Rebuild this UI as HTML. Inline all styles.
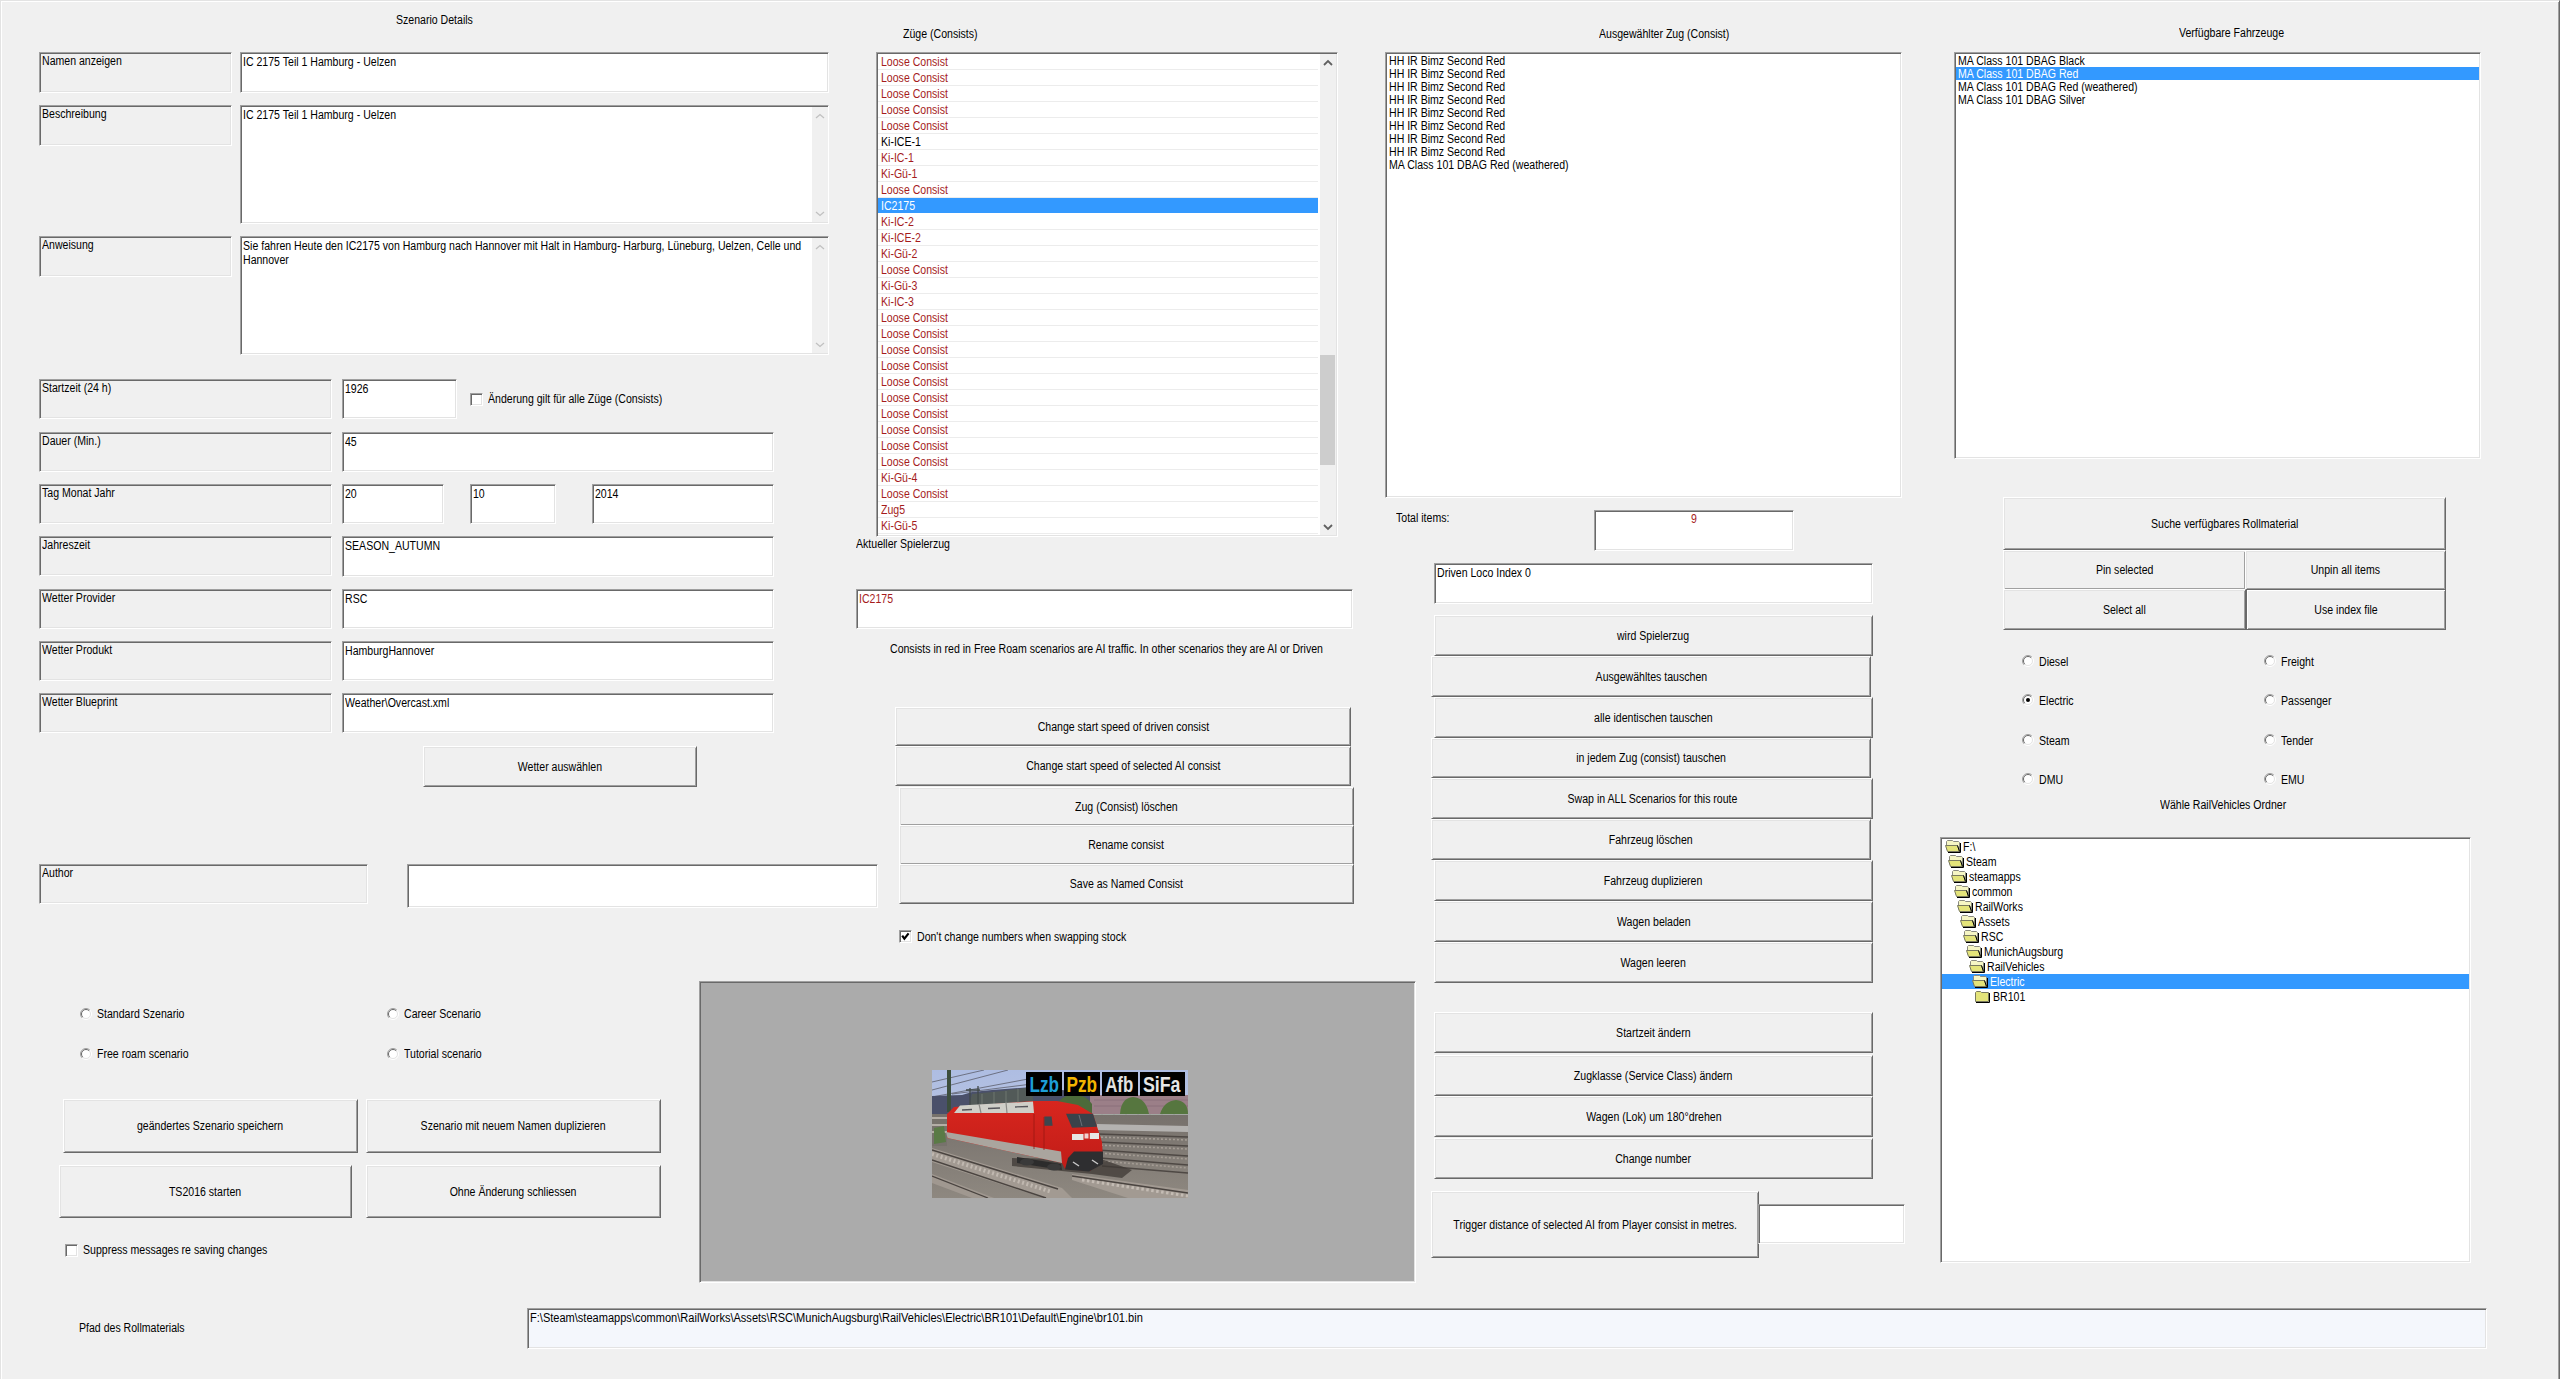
<!DOCTYPE html>
<html><head><meta charset="utf-8"><title>Scenario Editor</title>
<style>
html,body{margin:0;padding:0}
body{width:2560px;height:1379px;background:#f0f0f0;position:relative;overflow:hidden;font-family:"Liberation Sans",sans-serif;font-size:12px;color:#000}
.a{position:absolute;box-sizing:border-box}
.s{border:1px solid;border-color:#a0a0a0 #fff #fff #a0a0a0;box-shadow:inset 1px 1px 0 #696969,inset -1px -1px 0 #e3e3e3}
.r{border:1px solid;border-color:#fff #696969 #696969 #fff;box-shadow:inset 1px 1px 0 #e3e3e3,inset -1px -1px 0 #a0a0a0;background:#f0f0f0}
.b{display:flex;align-items:center;justify-content:center;white-space:pre;line-height:13px}
.b span{display:inline-block;transform:scaleX(0.88);position:relative;top:0.5px}
.t{position:absolute;white-space:pre;line-height:13px;transform:scaleX(0.88);transform-origin:0 0}
</style></head><body>
<div class="a" style="left:0;top:0;width:2560px;height:1379px;border-left:1px solid #e3e3e3;border-top:1px solid #e3e3e3;border-right:1px solid #696969;box-shadow:inset 1px 1px 0 #fff, inset -1px 0 0 #a0a0a0"></div>
<div class="t" style="left:396px;top:14.3px;">Szenario Details</div>
<div class="a s" style="left:39px;top:52px;width:193px;height:41px;background:#f0f0f0;"></div>
<div class="t" style="left:41.5px;top:55.3px;">Namen anzeigen</div>
<div class="a s" style="left:240px;top:52px;width:589px;height:41px;background:#fff;"></div>
<div class="t" style="left:243px;top:56.3px;">IC 2175 Teil 1 Hamburg - Uelzen</div>
<div class="a s" style="left:39px;top:105px;width:193px;height:41px;background:#f0f0f0;"></div>
<div class="t" style="left:41.5px;top:108.3px;">Beschreibung</div>
<div class="a s" style="left:240px;top:105px;width:589px;height:119px;background:#fff;"></div>
<div class="t" style="left:243px;top:109.3px;">IC 2175 Teil 1 Hamburg - Uelzen</div>
<div class="a s" style="left:39px;top:236px;width:193px;height:41px;background:#f0f0f0;"></div>
<div class="t" style="left:41.5px;top:239.3px;">Anweisung</div>
<div class="a s" style="left:240px;top:236px;width:589px;height:119px;background:#fff;"></div>
<div class="t" style="left:243px;top:240.3px;">Sie fahren Heute den IC2175 von Hamburg nach Hannover mit Halt in Hamburg- Harburg, Lüneburg, Uelzen, Celle und</div>
<div class="t" style="left:243px;top:254.0px;">Hannover</div>
<div class="a" style="left:812px;top:107px;width:16px;height:115px;background:#f0f0f0"></div>
<svg class="a" style="left:815px;top:113px" width="10" height="8"><path d="M1 5 L5 1.5 L9 5" stroke="#c0c0c0" stroke-width="1.3" fill="none"/></svg>
<svg class="a" style="left:815px;top:210px" width="10" height="8"><path d="M1 2 L5 5.5 L9 2" stroke="#c0c0c0" stroke-width="1.3" fill="none"/></svg>
<div class="a" style="left:812px;top:238px;width:16px;height:115px;background:#f0f0f0"></div>
<svg class="a" style="left:815px;top:244px" width="10" height="8"><path d="M1 5 L5 1.5 L9 5" stroke="#c0c0c0" stroke-width="1.3" fill="none"/></svg>
<svg class="a" style="left:815px;top:341px" width="10" height="8"><path d="M1 2 L5 5.5 L9 2" stroke="#c0c0c0" stroke-width="1.3" fill="none"/></svg>
<div class="a s" style="left:39px;top:379px;width:293px;height:40px;background:#f0f0f0;"></div>
<div class="t" style="left:41.5px;top:382.3px;">Startzeit (24 h)</div>
<div class="a s" style="left:39px;top:432px;width:293px;height:40px;background:#f0f0f0;"></div>
<div class="t" style="left:41.5px;top:435.3px;">Dauer (Min.)</div>
<div class="a s" style="left:39px;top:484px;width:293px;height:40px;background:#f0f0f0;"></div>
<div class="t" style="left:41.5px;top:487.3px;">Tag Monat Jahr</div>
<div class="a s" style="left:39px;top:536px;width:293px;height:40px;background:#f0f0f0;"></div>
<div class="t" style="left:41.5px;top:539.3px;">Jahreszeit</div>
<div class="a s" style="left:39px;top:589px;width:293px;height:40px;background:#f0f0f0;"></div>
<div class="t" style="left:41.5px;top:592.3px;">Wetter Provider</div>
<div class="a s" style="left:39px;top:641px;width:293px;height:40px;background:#f0f0f0;"></div>
<div class="t" style="left:41.5px;top:644.3px;">Wetter Produkt</div>
<div class="a s" style="left:39px;top:693px;width:293px;height:40px;background:#f0f0f0;"></div>
<div class="t" style="left:41.5px;top:696.3px;">Wetter Blueprint</div>
<div class="a s" style="left:342px;top:379px;width:115px;height:40px;background:#fff;"></div>
<div class="t" style="left:345px;top:383.3px;">1926</div>
<div class="a s" style="left:470px;top:393px;width:13px;height:13px;background:#fff"></div>
<div class="t" style="left:488px;top:392.6px;">Änderung gilt für alle Züge (Consists)</div>
<div class="a s" style="left:342px;top:432px;width:432px;height:40px;background:#fff;"></div>
<div class="t" style="left:345px;top:436.3px;">45</div>
<div class="a s" style="left:342px;top:484px;width:102px;height:40px;background:#fff;"></div>
<div class="t" style="left:345px;top:488.3px;">20</div>
<div class="a s" style="left:470px;top:484px;width:86px;height:40px;background:#fff;"></div>
<div class="t" style="left:473px;top:488.3px;">10</div>
<div class="a s" style="left:592px;top:484px;width:182px;height:40px;background:#fff;"></div>
<div class="t" style="left:595px;top:488.3px;">2014</div>
<div class="a s" style="left:342px;top:536px;width:432px;height:41px;background:#fff;"></div>
<div class="t" style="left:345px;top:540.3px;">SEASON_AUTUMN</div>
<div class="a s" style="left:342px;top:589px;width:432px;height:40px;background:#fff;"></div>
<div class="t" style="left:345px;top:593.3px;">RSC</div>
<div class="a s" style="left:342px;top:641px;width:432px;height:40px;background:#fff;"></div>
<div class="t" style="left:345px;top:645.3px;">HamburgHannover</div>
<div class="a s" style="left:342px;top:693px;width:432px;height:40px;background:#fff;"></div>
<div class="t" style="left:345px;top:697.3px;">Weather\Overcast.xml</div>
<div class="a r b" style="left:423px;top:746px;width:274px;height:41px;"><span>Wetter auswählen</span></div>
<div class="a s" style="left:39px;top:864px;width:329px;height:40px;background:#f0f0f0;"></div>
<div class="t" style="left:41.5px;top:867.3px;">Author</div>
<div class="a s" style="left:407px;top:864px;width:471px;height:44px;background:#fff;"></div>
<svg class="a" style="left:80px;top:1008px" width="12" height="12"><circle cx="6" cy="6" r="5" fill="#fff"/><path d="M2.1 9.9 A5.5 5.5 0 0 1 9.9 2.1" stroke="#a0a0a0" fill="none"/><path d="M9.9 2.1 A5.5 5.5 0 0 1 2.1 9.9" stroke="#fff" fill="none"/><path d="M2.8 9.2 A4.5 4.5 0 0 1 9.2 2.8" stroke="#696969" fill="none"/><path d="M9.2 2.8 A4.5 4.5 0 0 1 2.8 9.2" stroke="#e3e3e3" fill="none"/></svg>
<div class="t" style="left:97px;top:1007.8px;">Standard Szenario</div>
<svg class="a" style="left:80px;top:1048px" width="12" height="12"><circle cx="6" cy="6" r="5" fill="#fff"/><path d="M2.1 9.9 A5.5 5.5 0 0 1 9.9 2.1" stroke="#a0a0a0" fill="none"/><path d="M9.9 2.1 A5.5 5.5 0 0 1 2.1 9.9" stroke="#fff" fill="none"/><path d="M2.8 9.2 A4.5 4.5 0 0 1 9.2 2.8" stroke="#696969" fill="none"/><path d="M9.2 2.8 A4.5 4.5 0 0 1 2.8 9.2" stroke="#e3e3e3" fill="none"/></svg>
<div class="t" style="left:97px;top:1047.8px;">Free roam scenario</div>
<svg class="a" style="left:387px;top:1008px" width="12" height="12"><circle cx="6" cy="6" r="5" fill="#fff"/><path d="M2.1 9.9 A5.5 5.5 0 0 1 9.9 2.1" stroke="#a0a0a0" fill="none"/><path d="M9.9 2.1 A5.5 5.5 0 0 1 2.1 9.9" stroke="#fff" fill="none"/><path d="M2.8 9.2 A4.5 4.5 0 0 1 9.2 2.8" stroke="#696969" fill="none"/><path d="M9.2 2.8 A4.5 4.5 0 0 1 2.8 9.2" stroke="#e3e3e3" fill="none"/></svg>
<div class="t" style="left:404px;top:1007.8px;">Career Scenario</div>
<svg class="a" style="left:387px;top:1048px" width="12" height="12"><circle cx="6" cy="6" r="5" fill="#fff"/><path d="M2.1 9.9 A5.5 5.5 0 0 1 9.9 2.1" stroke="#a0a0a0" fill="none"/><path d="M9.9 2.1 A5.5 5.5 0 0 1 2.1 9.9" stroke="#fff" fill="none"/><path d="M2.8 9.2 A4.5 4.5 0 0 1 9.2 2.8" stroke="#696969" fill="none"/><path d="M9.2 2.8 A4.5 4.5 0 0 1 2.8 9.2" stroke="#e3e3e3" fill="none"/></svg>
<div class="t" style="left:404px;top:1047.8px;">Tutorial scenario</div>
<div class="a r b" style="left:63px;top:1099px;width:295px;height:54px;"><span>geändertes Szenario speichern</span></div>
<div class="a r b" style="left:366px;top:1099px;width:295px;height:54px;"><span>Szenario mit neuem Namen duplizieren</span></div>
<div class="a r b" style="left:59px;top:1165px;width:293px;height:53px;"><span>TS2016 starten</span></div>
<div class="a r b" style="left:366px;top:1165px;width:295px;height:53px;"><span>Ohne Änderung schliessen</span></div>
<div class="a s" style="left:65px;top:1244px;width:13px;height:13px;background:#fff"></div>
<div class="t" style="left:83px;top:1244.3px;">Suppress messages re saving changes</div>
<div class="t" style="left:79px;top:1322.3px;">Pfad des Rollmaterials</div>
<div class="a s" style="left:527px;top:1308px;width:1960px;height:41px;background:#f4f7fc;"></div>
<div class="t" style="left:530px;top:1312.3px;transform:scaleX(0.92)">F:\Steam\steamapps\common\RailWorks\Assets\RSC\MunichAugsburg\RailVehicles\Electric\BR101\Default\Engine\br101.bin</div>
<div class="a" style="left:699px;top:981px;width:717px;height:302px;background:#ababab;border:1px solid;border-color:#a0a0a0 #fff #fff #a0a0a0;box-shadow:inset 1px 1px 0 #696969, inset -1px -1px 0 #e3e3e3"></div>
<svg class="a" style="left:932px;top:1070px" width="256" height="128" viewBox="0 0 256 128">
<defs>
<linearGradient id="sky" x1="0" y1="0" x2="0" y2="1"><stop offset="0" stop-color="#aebde2"/><stop offset="1" stop-color="#c6cde0"/></linearGradient>
<linearGradient id="body" x1="0" y1="0" x2="0" y2="1"><stop offset="0" stop-color="#d8261e"/><stop offset="1" stop-color="#c01c18"/></linearGradient>
<linearGradient id="gnd" x1="0" y1="0" x2="0" y2="1"><stop offset="0" stop-color="#77716c"/><stop offset="1" stop-color="#8e8880"/></linearGradient>
</defs>
<rect width="256" height="128" fill="url(#sky)"/>
<path d="M0 12 L52 0 M0 20 L76 0 M0 27 L96 9 M20 24 L100 14" stroke="#50505a" stroke-width="0.7" fill="none"/>
<path d="M0 26 L30 25 L40 22 L60 20 L100 17 L130 20 L160 24 V50 H0 Z" fill="#4a506a"/>
<path d="M36 40 L40 24 L70 21 L100 17 L102 40 Z" fill="#525a58"/><path d="M50 24 V40 M62 22 V40 M74 21 V40 M86 19 V40" stroke="#6a726c" stroke-width="1.2"/>
<rect x="158" y="25" width="98" height="20" fill="#9b7f88"/>
<path d="M162 30 H256 M162 36 H256" stroke="#8a707a" stroke-width="1"/>
<path d="M124 36 Q128 26 140 25 Q154 24 160 34 V46 H124 Z" fill="#4c6a3a"/>
<path d="M188 44 Q189 28 201 27 Q214 28 217 44 Z" fill="#56763f"/>
<path d="M228 44 Q232 31 244 30 Q256 31 256 44 Z" fill="#56763f"/>
<rect x="158" y="44" width="98" height="13" fill="#a3a7a2"/>
<path d="M158 44 V57 M170 44 V57 M182 44 V57 M194 44 V57 M206 44 V57 M218 44 V57 M230 44 V57 M242 44 V57" stroke="#959a94" stroke-width="0.8"/>
<rect x="0" y="45" width="256" height="83" fill="url(#gnd)"/>
<rect x="0" y="44" width="15" height="32" fill="#77726c"/><path d="M0 48 H15 M0 55 H15 M0 62 H15" stroke="#b4aea6" stroke-width="2"/>
<path d="M165 54 L256 56 V62 L165 60 Z" fill="#b4b2b0"/>
<path d="M165 64 L256 67 M165 72 L256 76 M165 80 L256 86 M168 88 L256 95 M170 96 L256 103" stroke="#4e4844" stroke-width="1.4" fill="none"/>
<path d="M165 67 L256 70 M165 75 L256 79 M165 83 L256 89 M168 91 L256 98" stroke="#a49c94" stroke-width="1.6" stroke-dasharray="2 2" fill="none"/>
<path d="M0 78 L130 118 L140 128 H112 L0 92 Z" fill="#a29a92"/>
<path d="M0 80 L126 119 M0 90 L114 128" stroke="#4a4440" stroke-width="1.5" fill="none"/>
<path d="M0 84 L120 122" stroke="#c0b8b0" stroke-width="4" stroke-dasharray="2 2.5" fill="none"/>
<path d="M0 104 L62 128 H40 L0 113 Z" fill="#a09890"/>
<path d="M0 106 L56 128" stroke="#4a4440" stroke-width="1.3" fill="none"/>
<path d="M140 104 L256 120 V128 H196 L140 110 Z" fill="#a29a92"/>
<path d="M140 106 L256 123" stroke="#4a4440" stroke-width="1.4" fill="none"/>
<path d="M150 110 L256 126" stroke="#c4bcb4" stroke-width="3" stroke-dasharray="2.5 2.5" fill="none"/>
<rect x="15" y="0" width="4" height="42" fill="#3c4e3c"/>
<path d="M34 20 H48 M38 18 V38 M46 16 V36" stroke="#404848" stroke-width="1.3"/>
<path d="M2 58 L12 56 L14 72 L2 74 Z" fill="#5a7a46"/>
<path d="M80 96 L160 104 L190 108 L200 100 L172 90 L80 88 Z" fill="#3e3834" opacity="0.75"/>
<path d="M15 44 L22 37 L102 31 L125 31 L146 35 L161 44 L170 72 L171 89 L158 101 L133 99 L130 93 L15 68 Z" fill="url(#body)"/>
<path d="M22 43 L28 35.5 L101 31.5 L102 43 Z" fill="#cfcfc8"/>
<path d="M47 34 L49 43 M74 32.5 L75 43" stroke="#8a8a86" stroke-width="1.2"/>
<path d="M30 40 L40 39.5 M56 38.5 L68 38 M83 37 L96 36.5" stroke="#55555a" stroke-width="1.3"/>
<path d="M14 62 L129 81.5 L130 93 L15.5 68 Z" fill="#aaa59e"/>
<path d="M102 44 L102 79 M112 47 L112 80" stroke="#9a1612" stroke-width="0.8"/>
<path d="M112.4 46.4 L119.6 46.4 L120.6 55.7 L112.4 55.7 Z" fill="#3e464e"/>
<path d="M134 43.8 L161 43.8 L165 56.7 L140 57.7 Z" fill="#3a424a"/>
<path d="M147 45 L150 56" stroke="#6a7078" stroke-width="1"/>
<rect x="140" y="64" width="11.5" height="6" fill="#e6e6e4"/>
<rect x="157.8" y="63" width="9.2" height="6" fill="#e6e6e4"/>
<rect x="152.5" y="63.5" width="4" height="5" fill="#f0d0d0"/>
<path d="M85 87 L129 94 L130 100 L85 93 Z" fill="#2c2c2c"/>
<ellipse cx="95" cy="92" rx="7" ry="3.5" fill="#3a3a3a"/>
<ellipse cx="122" cy="97" rx="7" ry="3.5" fill="#3a3a3a"/>
<path d="M142 81.5 L171 81.5 L171 94 L157 101.5 L133 99.5 L136 88 Z" fill="#2e2e30"/>
<path d="M141 92 L147 96 M160 90 L166 94" stroke="#c8c8c8" stroke-width="1.5"/>
<rect x="94" y="2" width="36" height="24" fill="#000"/>
<rect x="132" y="2" width="36" height="24" fill="#000"/>
<rect x="170" y="2" width="36" height="24" fill="#000"/>
<rect x="208" y="2" width="45" height="24" fill="#000"/>
<g font-family="Liberation Sans" font-weight="bold" font-size="22">
<text x="97.5" y="21.7" fill="#1d9ed8" textLength="29.5" lengthAdjust="spacingAndGlyphs">Lzb</text>
<text x="134.6" y="21.7" fill="#f2b500" textLength="30.5" lengthAdjust="spacingAndGlyphs">Pzb</text>
<text x="173.2" y="21.7" fill="#e2e2e2" textLength="28" lengthAdjust="spacingAndGlyphs">Afb</text>
<text x="210.9" y="21.7" fill="#e6e6e6" textLength="37.5" lengthAdjust="spacingAndGlyphs">SiFa</text>
</g>
</svg>
<div class="t" style="left:903px;top:27.5px;">Züge (Consists)</div>
<div class="a s" style="left:876px;top:52px;width:462px;height:485px;background:#fff;"></div>
<div class="a" style="left:878px;top:69px;width:440px;height:1px;background:#ececec"></div>
<div class="t" style="left:881px;top:56.4px;color:#a51c1c;">Loose Consist</div>
<div class="a" style="left:878px;top:85px;width:440px;height:1px;background:#ececec"></div>
<div class="t" style="left:881px;top:72.4px;color:#a51c1c;">Loose Consist</div>
<div class="a" style="left:878px;top:101px;width:440px;height:1px;background:#ececec"></div>
<div class="t" style="left:881px;top:88.4px;color:#a51c1c;">Loose Consist</div>
<div class="a" style="left:878px;top:117px;width:440px;height:1px;background:#ececec"></div>
<div class="t" style="left:881px;top:104.4px;color:#a51c1c;">Loose Consist</div>
<div class="a" style="left:878px;top:133px;width:440px;height:1px;background:#ececec"></div>
<div class="t" style="left:881px;top:120.4px;color:#a51c1c;">Loose Consist</div>
<div class="a" style="left:878px;top:149px;width:440px;height:1px;background:#ececec"></div>
<div class="t" style="left:881px;top:136.4px;color:#000;">Ki-ICE-1</div>
<div class="a" style="left:878px;top:165px;width:440px;height:1px;background:#ececec"></div>
<div class="t" style="left:881px;top:152.4px;color:#a51c1c;">Ki-IC-1</div>
<div class="a" style="left:878px;top:181px;width:440px;height:1px;background:#ececec"></div>
<div class="t" style="left:881px;top:168.4px;color:#a51c1c;">Ki-Gü-1</div>
<div class="a" style="left:878px;top:197px;width:440px;height:1px;background:#ececec"></div>
<div class="t" style="left:881px;top:184.4px;color:#a51c1c;">Loose Consist</div>
<div class="a" style="left:878px;top:198px;width:440px;height:15px;background:#3399ff"></div>
<div class="t" style="left:881px;top:200.4px;color:#fff;">IC2175</div>
<div class="a" style="left:878px;top:229px;width:440px;height:1px;background:#ececec"></div>
<div class="t" style="left:881px;top:216.4px;color:#a51c1c;">Ki-IC-2</div>
<div class="a" style="left:878px;top:245px;width:440px;height:1px;background:#ececec"></div>
<div class="t" style="left:881px;top:232.4px;color:#a51c1c;">Ki-ICE-2</div>
<div class="a" style="left:878px;top:261px;width:440px;height:1px;background:#ececec"></div>
<div class="t" style="left:881px;top:248.4px;color:#a51c1c;">Ki-Gü-2</div>
<div class="a" style="left:878px;top:277px;width:440px;height:1px;background:#ececec"></div>
<div class="t" style="left:881px;top:264.4px;color:#a51c1c;">Loose Consist</div>
<div class="a" style="left:878px;top:293px;width:440px;height:1px;background:#ececec"></div>
<div class="t" style="left:881px;top:280.4px;color:#a51c1c;">Ki-Gü-3</div>
<div class="a" style="left:878px;top:309px;width:440px;height:1px;background:#ececec"></div>
<div class="t" style="left:881px;top:296.4px;color:#a51c1c;">Ki-IC-3</div>
<div class="a" style="left:878px;top:325px;width:440px;height:1px;background:#ececec"></div>
<div class="t" style="left:881px;top:312.4px;color:#a51c1c;">Loose Consist</div>
<div class="a" style="left:878px;top:341px;width:440px;height:1px;background:#ececec"></div>
<div class="t" style="left:881px;top:328.4px;color:#a51c1c;">Loose Consist</div>
<div class="a" style="left:878px;top:357px;width:440px;height:1px;background:#ececec"></div>
<div class="t" style="left:881px;top:344.4px;color:#a51c1c;">Loose Consist</div>
<div class="a" style="left:878px;top:373px;width:440px;height:1px;background:#ececec"></div>
<div class="t" style="left:881px;top:360.4px;color:#a51c1c;">Loose Consist</div>
<div class="a" style="left:878px;top:389px;width:440px;height:1px;background:#ececec"></div>
<div class="t" style="left:881px;top:376.4px;color:#a51c1c;">Loose Consist</div>
<div class="a" style="left:878px;top:405px;width:440px;height:1px;background:#ececec"></div>
<div class="t" style="left:881px;top:392.4px;color:#a51c1c;">Loose Consist</div>
<div class="a" style="left:878px;top:421px;width:440px;height:1px;background:#ececec"></div>
<div class="t" style="left:881px;top:408.4px;color:#a51c1c;">Loose Consist</div>
<div class="a" style="left:878px;top:437px;width:440px;height:1px;background:#ececec"></div>
<div class="t" style="left:881px;top:424.4px;color:#a51c1c;">Loose Consist</div>
<div class="a" style="left:878px;top:453px;width:440px;height:1px;background:#ececec"></div>
<div class="t" style="left:881px;top:440.4px;color:#a51c1c;">Loose Consist</div>
<div class="a" style="left:878px;top:469px;width:440px;height:1px;background:#ececec"></div>
<div class="t" style="left:881px;top:456.4px;color:#a51c1c;">Loose Consist</div>
<div class="a" style="left:878px;top:485px;width:440px;height:1px;background:#ececec"></div>
<div class="t" style="left:881px;top:472.4px;color:#a51c1c;">Ki-Gü-4</div>
<div class="a" style="left:878px;top:501px;width:440px;height:1px;background:#ececec"></div>
<div class="t" style="left:881px;top:488.4px;color:#a51c1c;">Loose Consist</div>
<div class="a" style="left:878px;top:517px;width:440px;height:1px;background:#ececec"></div>
<div class="t" style="left:881px;top:504.4px;color:#a51c1c;">Zug5</div>
<div class="a" style="left:878px;top:533px;width:440px;height:1px;background:#ececec"></div>
<div class="t" style="left:881px;top:520.4px;color:#a51c1c;">Ki-Gü-5</div>
<div class="a" style="left:1320px;top:54px;width:16px;height:481px;background:#f0f0f0"></div>
<div class="a" style="left:1320px;top:355px;width:15px;height:110px;background:#cdcdcd"></div>
<svg class="a" style="left:1322px;top:58px" width="12" height="10"><path d="M2 7 L6 3 L10 7" stroke="#606060" stroke-width="1.8" fill="none"/></svg>
<svg class="a" style="left:1322px;top:522px" width="12" height="10"><path d="M2 3 L6 7 L10 3" stroke="#606060" stroke-width="1.8" fill="none"/></svg>
<div class="t" style="left:856px;top:537.6px;">Aktueller Spielerzug</div>
<div class="a s" style="left:856px;top:589px;width:497px;height:40px;background:#fff;"></div>
<div class="t" style="left:859px;top:593.3px;color:#a51c1c;">IC2175</div>
<div class="t" style="left:889.6px;top:642.6px;">Consists in red in Free Roam scenarios are AI traffic. In other scenarios they are AI or Driven</div>
<div class="a r b" style="left:895px;top:707px;width:456px;height:39px;"><span>Change start speed of driven consist</span></div>
<div class="a r b" style="left:895px;top:746px;width:456px;height:40px;"><span>Change start speed of selected AI consist</span></div>
<div class="a r b" style="left:899px;top:787px;width:455px;height:39px;"><span>Zug (Consist) löschen</span></div>
<div class="a r b" style="left:899px;top:825px;width:455px;height:40px;"><span>Rename consist</span></div>
<div class="a r b" style="left:899px;top:864px;width:455px;height:40px;"><span>Save as Named Consist</span></div>
<div class="a s" style="left:899px;top:930px;width:13px;height:13px;background:#fff"></div>
<svg class="a" style="left:899px;top:930px" width="13" height="13"><path d="M3.2 5.6 L5.4 8.6 L9.6 3.4" stroke="#000" stroke-width="2.2" fill="none"/></svg>
<div class="t" style="left:917px;top:930.5px;">Don't change numbers when swapping stock</div>
<div class="t" style="left:1599px;top:27.5px;">Ausgewählter Zug (Consist)</div>
<div class="a s" style="left:1385px;top:52px;width:517px;height:446px;background:#fff;"></div>
<div class="t" style="left:1389px;top:55.0px;">HH IR Bimz Second Red</div>
<div class="t" style="left:1389px;top:68.0px;">HH IR Bimz Second Red</div>
<div class="t" style="left:1389px;top:81.0px;">HH IR Bimz Second Red</div>
<div class="t" style="left:1389px;top:94.0px;">HH IR Bimz Second Red</div>
<div class="t" style="left:1389px;top:107.0px;">HH IR Bimz Second Red</div>
<div class="t" style="left:1389px;top:120.0px;">HH IR Bimz Second Red</div>
<div class="t" style="left:1389px;top:133.0px;">HH IR Bimz Second Red</div>
<div class="t" style="left:1389px;top:146.0px;">HH IR Bimz Second Red</div>
<div class="t" style="left:1389px;top:159.0px;">MA Class 101 DBAG Red (weathered)</div>
<div class="t" style="left:1396px;top:511.5px;">Total items:</div>
<div class="a s" style="left:1594px;top:510px;width:200px;height:41px;background:#fff;"></div>
<div class="t" style="left:1594px;width:200px;text-align:center;top:513.3px;color:#a51c1c;transform-origin:50% 0">9</div>
<div class="a s" style="left:1434px;top:563px;width:439px;height:41px;background:#fff;"></div>
<div class="t" style="left:1437px;top:567.3px;">Driven Loco Index 0</div>
<div class="a r b" style="left:1434px;top:615px;width:439px;height:41px;"><span>wird Spielerzug</span></div>
<div class="a r b" style="left:1431px;top:656px;width:440px;height:41px;"><span>Ausgewähltes tauschen</span></div>
<div class="a r b" style="left:1434px;top:697px;width:439px;height:41px;"><span>alle identischen tauschen</span></div>
<div class="a r b" style="left:1431px;top:738px;width:440px;height:40px;"><span>in jedem Zug (consist) tauschen</span></div>
<div class="a r b" style="left:1431px;top:778px;width:442px;height:41px;"><span>Swap in ALL Scenarios for this route</span></div>
<div class="a r b" style="left:1431px;top:819px;width:440px;height:41px;"><span>Fahrzeug löschen</span></div>
<div class="a r b" style="left:1434px;top:860px;width:439px;height:41px;"><span>Fahrzeug duplizieren</span></div>
<div class="a r b" style="left:1434px;top:901px;width:439px;height:41px;"><span>Wagen beladen</span></div>
<div class="a r b" style="left:1434px;top:942px;width:439px;height:41px;"><span>Wagen leeren</span></div>
<div class="a r b" style="left:1434px;top:1012px;width:439px;height:41px;"><span>Startzeit ändern</span></div>
<div class="a r b" style="left:1434px;top:1055px;width:439px;height:41px;"><span>Zugklasse (Service Class) ändern</span></div>
<div class="a r b" style="left:1434px;top:1096px;width:439px;height:41px;"><span>Wagen (Lok) um 180°drehen</span></div>
<div class="a r b" style="left:1434px;top:1138px;width:439px;height:41px;"><span>Change number</span></div>
<div class="a r b" style="left:1431px;top:1191px;width:328px;height:67px;"><span>Trigger distance of selected AI from Player consist in metres.</span></div>
<div class="a s" style="left:1758px;top:1204px;width:147px;height:40px;background:#fff;"></div>
<div class="t" style="left:2179px;top:27.3px;">Verfügbare Fahrzeuge</div>
<div class="a s" style="left:1954px;top:52px;width:527px;height:407px;background:#fff;"></div>
<div class="a" style="left:1956px;top:67px;width:523px;height:13px;background:#3399ff"></div>
<div class="t" style="left:1958px;top:55.0px;">MA Class 101 DBAG Black</div>
<div class="t" style="left:1958px;top:68.0px;color:#fff;">MA Class 101 DBAG Red</div>
<div class="t" style="left:1958px;top:81.0px;">MA Class 101 DBAG Red (weathered)</div>
<div class="t" style="left:1958px;top:94.0px;">MA Class 101 DBAG Silver</div>
<div class="a r b" style="left:2003px;top:497px;width:443px;height:53px;"><span>Suche verfügbares Rollmaterial</span></div>
<div class="a r b" style="left:2003px;top:550px;width:243px;height:40px;"><span>Pin selected</span></div>
<div class="a r b" style="left:2245px;top:550px;width:201px;height:40px;"><span>Unpin all items</span></div>
<div class="a r b" style="left:2003px;top:589px;width:243px;height:41px;"><span>Select all</span></div>
<div class="a b" style="left:2246px;top:589px;width:200px;height:41px;border:1px solid #696969;box-shadow:inset 1px 1px 0 #fff, inset -1px -1px 0 #a0a0a0;"><span>Use index file</span></div>
<svg class="a" style="left:2022px;top:655px" width="12" height="12"><circle cx="6" cy="6" r="5" fill="#fff"/><path d="M2.1 9.9 A5.5 5.5 0 0 1 9.9 2.1" stroke="#a0a0a0" fill="none"/><path d="M9.9 2.1 A5.5 5.5 0 0 1 2.1 9.9" stroke="#fff" fill="none"/><path d="M2.8 9.2 A4.5 4.5 0 0 1 9.2 2.8" stroke="#696969" fill="none"/><path d="M9.2 2.8 A4.5 4.5 0 0 1 2.8 9.2" stroke="#e3e3e3" fill="none"/></svg>
<div class="t" style="left:2039px;top:655.8px;">Diesel</div>
<svg class="a" style="left:2264px;top:655px" width="12" height="12"><circle cx="6" cy="6" r="5" fill="#fff"/><path d="M2.1 9.9 A5.5 5.5 0 0 1 9.9 2.1" stroke="#a0a0a0" fill="none"/><path d="M9.9 2.1 A5.5 5.5 0 0 1 2.1 9.9" stroke="#fff" fill="none"/><path d="M2.8 9.2 A4.5 4.5 0 0 1 9.2 2.8" stroke="#696969" fill="none"/><path d="M9.2 2.8 A4.5 4.5 0 0 1 2.8 9.2" stroke="#e3e3e3" fill="none"/></svg>
<div class="t" style="left:2281px;top:655.8px;">Freight</div>
<svg class="a" style="left:2022px;top:694px" width="12" height="12"><circle cx="6" cy="6" r="5" fill="#fff"/><path d="M2.1 9.9 A5.5 5.5 0 0 1 9.9 2.1" stroke="#a0a0a0" fill="none"/><path d="M9.9 2.1 A5.5 5.5 0 0 1 2.1 9.9" stroke="#fff" fill="none"/><path d="M2.8 9.2 A4.5 4.5 0 0 1 9.2 2.8" stroke="#696969" fill="none"/><path d="M9.2 2.8 A4.5 4.5 0 0 1 2.8 9.2" stroke="#e3e3e3" fill="none"/><circle cx="6" cy="6" r="2" fill="#000"/></svg>
<div class="t" style="left:2039px;top:694.8px;">Electric</div>
<svg class="a" style="left:2264px;top:694px" width="12" height="12"><circle cx="6" cy="6" r="5" fill="#fff"/><path d="M2.1 9.9 A5.5 5.5 0 0 1 9.9 2.1" stroke="#a0a0a0" fill="none"/><path d="M9.9 2.1 A5.5 5.5 0 0 1 2.1 9.9" stroke="#fff" fill="none"/><path d="M2.8 9.2 A4.5 4.5 0 0 1 9.2 2.8" stroke="#696969" fill="none"/><path d="M9.2 2.8 A4.5 4.5 0 0 1 2.8 9.2" stroke="#e3e3e3" fill="none"/></svg>
<div class="t" style="left:2281px;top:694.8px;">Passenger</div>
<svg class="a" style="left:2022px;top:734px" width="12" height="12"><circle cx="6" cy="6" r="5" fill="#fff"/><path d="M2.1 9.9 A5.5 5.5 0 0 1 9.9 2.1" stroke="#a0a0a0" fill="none"/><path d="M9.9 2.1 A5.5 5.5 0 0 1 2.1 9.9" stroke="#fff" fill="none"/><path d="M2.8 9.2 A4.5 4.5 0 0 1 9.2 2.8" stroke="#696969" fill="none"/><path d="M9.2 2.8 A4.5 4.5 0 0 1 2.8 9.2" stroke="#e3e3e3" fill="none"/></svg>
<div class="t" style="left:2039px;top:734.8px;">Steam</div>
<svg class="a" style="left:2264px;top:734px" width="12" height="12"><circle cx="6" cy="6" r="5" fill="#fff"/><path d="M2.1 9.9 A5.5 5.5 0 0 1 9.9 2.1" stroke="#a0a0a0" fill="none"/><path d="M9.9 2.1 A5.5 5.5 0 0 1 2.1 9.9" stroke="#fff" fill="none"/><path d="M2.8 9.2 A4.5 4.5 0 0 1 9.2 2.8" stroke="#696969" fill="none"/><path d="M9.2 2.8 A4.5 4.5 0 0 1 2.8 9.2" stroke="#e3e3e3" fill="none"/></svg>
<div class="t" style="left:2281px;top:734.8px;">Tender</div>
<svg class="a" style="left:2022px;top:773px" width="12" height="12"><circle cx="6" cy="6" r="5" fill="#fff"/><path d="M2.1 9.9 A5.5 5.5 0 0 1 9.9 2.1" stroke="#a0a0a0" fill="none"/><path d="M9.9 2.1 A5.5 5.5 0 0 1 2.1 9.9" stroke="#fff" fill="none"/><path d="M2.8 9.2 A4.5 4.5 0 0 1 9.2 2.8" stroke="#696969" fill="none"/><path d="M9.2 2.8 A4.5 4.5 0 0 1 2.8 9.2" stroke="#e3e3e3" fill="none"/></svg>
<div class="t" style="left:2039px;top:773.8px;">DMU</div>
<svg class="a" style="left:2264px;top:773px" width="12" height="12"><circle cx="6" cy="6" r="5" fill="#fff"/><path d="M2.1 9.9 A5.5 5.5 0 0 1 9.9 2.1" stroke="#a0a0a0" fill="none"/><path d="M9.9 2.1 A5.5 5.5 0 0 1 2.1 9.9" stroke="#fff" fill="none"/><path d="M2.8 9.2 A4.5 4.5 0 0 1 9.2 2.8" stroke="#696969" fill="none"/><path d="M9.2 2.8 A4.5 4.5 0 0 1 2.8 9.2" stroke="#e3e3e3" fill="none"/></svg>
<div class="t" style="left:2281px;top:773.8px;">EMU</div>
<div class="t" style="left:2160px;top:799.1px;">Wähle RailVehicles Ordner</div>
<div class="a s" style="left:1940px;top:837px;width:531px;height:426px;background:#fff;"></div>
<svg class="a" style="left:1945px;top:840px" width="16" height="13"><path d="M1.5 8.5 V1.5 L2.5 0.5 H7.5 L8.5 1.5 H13.5 L14.5 2.5 V11.5 H3.5 Z" fill="#f6f6c4" stroke="#8a8a80"/><path d="M0.5 5.5 H12.5 L14.5 11.5 H2.5 Z" fill="#e4e47a" stroke="#7a7a60"/><path d="M12.5 5.5 L14.5 11.5" stroke="#000"/><path d="M15.5 3 V12.5 H3" stroke="#000" fill="none"/></svg>
<div class="t" style="left:1963px;top:841.2px;color:#000">F:\</div>
<svg class="a" style="left:1948px;top:855px" width="16" height="13"><path d="M1.5 8.5 V1.5 L2.5 0.5 H7.5 L8.5 1.5 H13.5 L14.5 2.5 V11.5 H3.5 Z" fill="#f6f6c4" stroke="#8a8a80"/><path d="M0.5 5.5 H12.5 L14.5 11.5 H2.5 Z" fill="#e4e47a" stroke="#7a7a60"/><path d="M12.5 5.5 L14.5 11.5" stroke="#000"/><path d="M15.5 3 V12.5 H3" stroke="#000" fill="none"/></svg>
<div class="t" style="left:1966px;top:856.2px;color:#000">Steam</div>
<svg class="a" style="left:1951px;top:870px" width="16" height="13"><path d="M1.5 8.5 V1.5 L2.5 0.5 H7.5 L8.5 1.5 H13.5 L14.5 2.5 V11.5 H3.5 Z" fill="#f6f6c4" stroke="#8a8a80"/><path d="M0.5 5.5 H12.5 L14.5 11.5 H2.5 Z" fill="#e4e47a" stroke="#7a7a60"/><path d="M12.5 5.5 L14.5 11.5" stroke="#000"/><path d="M15.5 3 V12.5 H3" stroke="#000" fill="none"/></svg>
<div class="t" style="left:1969px;top:871.2px;color:#000">steamapps</div>
<svg class="a" style="left:1954px;top:885px" width="16" height="13"><path d="M1.5 8.5 V1.5 L2.5 0.5 H7.5 L8.5 1.5 H13.5 L14.5 2.5 V11.5 H3.5 Z" fill="#f6f6c4" stroke="#8a8a80"/><path d="M0.5 5.5 H12.5 L14.5 11.5 H2.5 Z" fill="#e4e47a" stroke="#7a7a60"/><path d="M12.5 5.5 L14.5 11.5" stroke="#000"/><path d="M15.5 3 V12.5 H3" stroke="#000" fill="none"/></svg>
<div class="t" style="left:1972px;top:886.2px;color:#000">common</div>
<svg class="a" style="left:1957px;top:900px" width="16" height="13"><path d="M1.5 8.5 V1.5 L2.5 0.5 H7.5 L8.5 1.5 H13.5 L14.5 2.5 V11.5 H3.5 Z" fill="#f6f6c4" stroke="#8a8a80"/><path d="M0.5 5.5 H12.5 L14.5 11.5 H2.5 Z" fill="#e4e47a" stroke="#7a7a60"/><path d="M12.5 5.5 L14.5 11.5" stroke="#000"/><path d="M15.5 3 V12.5 H3" stroke="#000" fill="none"/></svg>
<div class="t" style="left:1975px;top:901.2px;color:#000">RailWorks</div>
<svg class="a" style="left:1960px;top:915px" width="16" height="13"><path d="M1.5 8.5 V1.5 L2.5 0.5 H7.5 L8.5 1.5 H13.5 L14.5 2.5 V11.5 H3.5 Z" fill="#f6f6c4" stroke="#8a8a80"/><path d="M0.5 5.5 H12.5 L14.5 11.5 H2.5 Z" fill="#e4e47a" stroke="#7a7a60"/><path d="M12.5 5.5 L14.5 11.5" stroke="#000"/><path d="M15.5 3 V12.5 H3" stroke="#000" fill="none"/></svg>
<div class="t" style="left:1978px;top:916.2px;color:#000">Assets</div>
<svg class="a" style="left:1963px;top:930px" width="16" height="13"><path d="M1.5 8.5 V1.5 L2.5 0.5 H7.5 L8.5 1.5 H13.5 L14.5 2.5 V11.5 H3.5 Z" fill="#f6f6c4" stroke="#8a8a80"/><path d="M0.5 5.5 H12.5 L14.5 11.5 H2.5 Z" fill="#e4e47a" stroke="#7a7a60"/><path d="M12.5 5.5 L14.5 11.5" stroke="#000"/><path d="M15.5 3 V12.5 H3" stroke="#000" fill="none"/></svg>
<div class="t" style="left:1981px;top:931.2px;color:#000">RSC</div>
<svg class="a" style="left:1966px;top:945px" width="16" height="13"><path d="M1.5 8.5 V1.5 L2.5 0.5 H7.5 L8.5 1.5 H13.5 L14.5 2.5 V11.5 H3.5 Z" fill="#f6f6c4" stroke="#8a8a80"/><path d="M0.5 5.5 H12.5 L14.5 11.5 H2.5 Z" fill="#e4e47a" stroke="#7a7a60"/><path d="M12.5 5.5 L14.5 11.5" stroke="#000"/><path d="M15.5 3 V12.5 H3" stroke="#000" fill="none"/></svg>
<div class="t" style="left:1984px;top:946.2px;color:#000">MunichAugsburg</div>
<svg class="a" style="left:1969px;top:960px" width="16" height="13"><path d="M1.5 8.5 V1.5 L2.5 0.5 H7.5 L8.5 1.5 H13.5 L14.5 2.5 V11.5 H3.5 Z" fill="#f6f6c4" stroke="#8a8a80"/><path d="M0.5 5.5 H12.5 L14.5 11.5 H2.5 Z" fill="#e4e47a" stroke="#7a7a60"/><path d="M12.5 5.5 L14.5 11.5" stroke="#000"/><path d="M15.5 3 V12.5 H3" stroke="#000" fill="none"/></svg>
<div class="t" style="left:1987px;top:961.2px;color:#000">RailVehicles</div>
<div class="a" style="left:1942px;top:974px;width:527px;height:15px;background:#3399ff"></div>
<svg class="a" style="left:1972px;top:975px" width="16" height="13"><path d="M1.5 8.5 V1.5 L2.5 0.5 H7.5 L8.5 1.5 H13.5 L14.5 2.5 V11.5 H3.5 Z" fill="#f6f6c4" stroke="#8a8a80"/><path d="M0.5 5.5 H12.5 L14.5 11.5 H2.5 Z" fill="#e4e47a" stroke="#7a7a60"/><path d="M12.5 5.5 L14.5 11.5" stroke="#000"/><path d="M15.5 3 V12.5 H3" stroke="#000" fill="none"/></svg>
<div class="t" style="left:1990px;top:976.2px;color:#fff">Electric</div>
<svg class="a" style="left:1975px;top:990px" width="16" height="13"><path d="M0.5 2.5 L1.5 1.5 H5.5 L6.5 2.5 H13.5 V11.5 H0.5 Z" fill="#e4e47a" stroke="#7a7a60"/><path d="M14.5 3 V12.5 H1" stroke="#000" fill="none"/></svg>
<div class="t" style="left:1993px;top:991.2px;color:#000">BR101</div>
</body></html>
